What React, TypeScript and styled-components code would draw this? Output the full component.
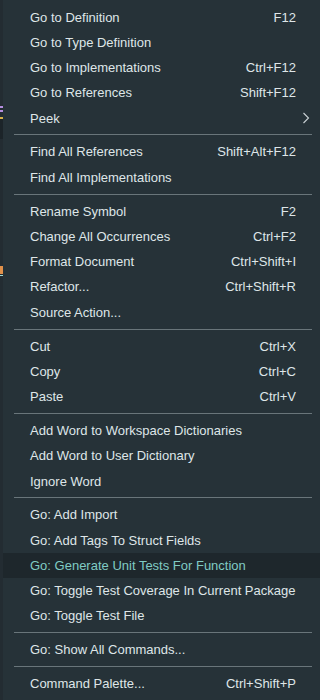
import React from "react";
import styled, { createGlobalStyle } from "styled-components";

type Item = { label: string; keys?: string; submenu?: boolean; active?: boolean };

const groups: Item[][] = [
  [
    { label: "Go to Definition", keys: "F12" },
    { label: "Go to Type Definition" },
    { label: "Go to Implementations", keys: "Ctrl+F12" },
    { label: "Go to References", keys: "Shift+F12" },
    { label: "Peek", submenu: true },
  ],
  [
    { label: "Find All References", keys: "Shift+Alt+F12" },
    { label: "Find All Implementations" },
  ],
  [
    { label: "Rename Symbol", keys: "F2" },
    { label: "Change All Occurrences", keys: "Ctrl+F2" },
    { label: "Format Document", keys: "Ctrl+Shift+I" },
    { label: "Refactor...", keys: "Ctrl+Shift+R" },
    { label: "Source Action..." },
  ],
  [
    { label: "Cut", keys: "Ctrl+X" },
    { label: "Copy", keys: "Ctrl+C" },
    { label: "Paste", keys: "Ctrl+V" },
  ],
  [
    { label: "Add Word to Workspace Dictionaries" },
    { label: "Add Word to User Dictionary" },
    { label: "Ignore Word" },
  ],
  [
    { label: "Go: Add Import" },
    { label: "Go: Add Tags To Struct Fields" },
    { label: "Go: Generate Unit Tests For Function", active: true },
    { label: "Go: Toggle Test Coverage In Current Package" },
    { label: "Go: Toggle Test File" },
  ],
  [{ label: "Go: Show All Commands..." }],
  [{ label: "Command Palette...", keys: "Ctrl+Shift+P" }],
];

const GlobalStyle = createGlobalStyle`
  html, body {
    margin: 0;
    padding: 0;
    background: #263238;
    font-family: "Liberation Sans", Arial, sans-serif;
  }
`;

const Chevron = () => (
  <svg width="8" height="12" viewBox="0 0 8 12" fill="none">
    <path d="M1.5 1l5 5-5 5" stroke="#c9d1d4" strokeWidth="1.1" />
  </svg>
);

const App: React.FC = () => {
  return (
    <>
      <GlobalStyle />
      <Screen>
        <Gutter>
          <Mark color="#b48ee0" top={106} height={2} />
          <Mark color="#b48ee0" top={110} height={2} />
          <Mark color="#d8b04a" top={117} height={2} />
          <Block top={119} height={20} />
          <Mark color="#e0904a" top={266} height={8} />
          <Mark color="#9fd8d2" top={275} height={1} />
        </Gutter>
        <Menu>
          {groups.map((group, gi) => (
            <React.Fragment key={gi}>
              {gi > 0 && <Separator />}
              {group.map((item) => (
                <Row key={item.label} $active={item.active}>
                  <Label>{item.label}</Label>
                  {item.keys && <Keys>{item.keys}</Keys>}
                  {item.submenu && (
                    <Arrow>
                      <Chevron />
                    </Arrow>
                  )}
                </Row>
              ))}
            </React.Fragment>
          ))}
        </Menu>
      </Screen>
    </>
  );
};

export default App;

const Screen = styled.div`
  display: flex;
  width: 320px;
  height: 700px;
  overflow: hidden;
`;

const Gutter = styled.div`
  position: relative;
  width: 3px;
  flex-shrink: 0;
  background: #232c32;
`;

const Mark = styled.div<{ color: string; top: number; height: number }>`
  position: absolute;
  left: 0;
  width: 3px;
  top: ${(p) => p.top}px;
  height: ${(p) => p.height}px;
  background: ${(p) => p.color};
`;

const Block = styled.div<{ top: number; height: number }>`
  position: absolute;
  left: 0;
  width: 3px;
  top: ${(p) => p.top}px;
  height: ${(p) => p.height}px;
  background: #1c2429;
`;

const Menu = styled.div`
  flex: 1;
  display: flex;
  flex-direction: column;
  padding-top: 4.4px;
  background: #263238;
`;

const Row = styled.div<{ $active?: boolean }>`
  display: flex;
  align-items: center;
  height: 25.25px;
  flex-shrink: 0;
  padding: 0 24px 0 27px;
  font-size: 13px;
  color: ${(p) => (p.$active ? "#80cbc4" : "#dfe6e8")};
  background: ${(p) => (p.$active ? "#1e272c" : "transparent")};
  white-space: nowrap;
`;

const Label = styled.span`
  flex: 1;
`;

const Keys = styled.span`
  margin-left: 16px;
`;

const Arrow = styled.span`
  display: flex;
  margin-right: -14px;
`;

const Separator = styled.div`
  flex-shrink: 0;
  height: 1px;
  margin: 3.85px 8px 3.85px 11px;
  background: #69757a;
`;
